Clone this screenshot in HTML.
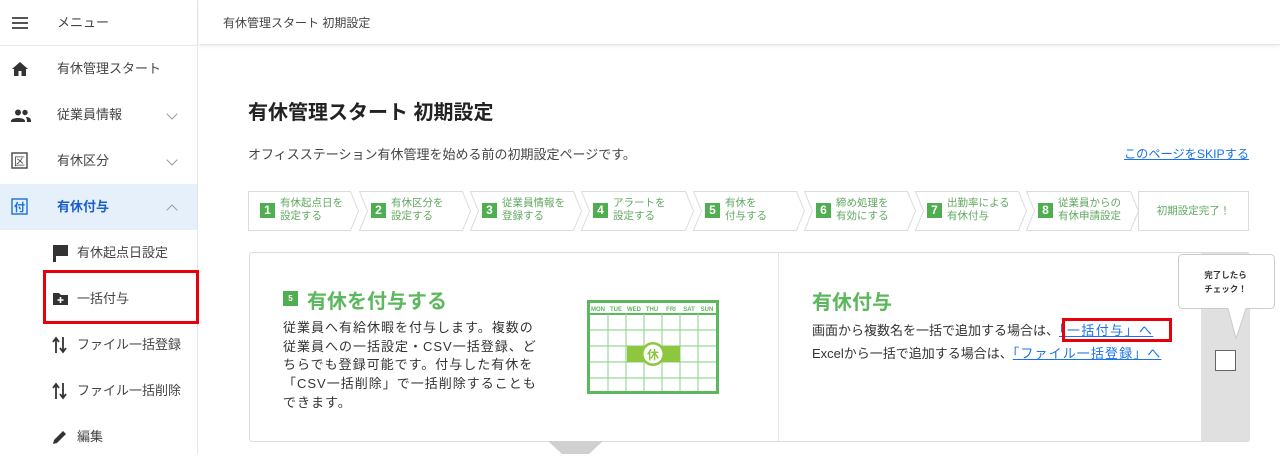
<!DOCTYPE html>
<html lang="ja"><head><meta charset="utf-8">
<style>
*{margin:0;padding:0;box-sizing:border-box}
body{width:1280px;height:454px;overflow:hidden;background:#fff;font-family:"Liberation Sans","Noto Sans CJK JP",sans-serif;color:#333;position:relative}
.a{position:absolute}
.side{left:0;top:0;width:198px;height:454px;border-right:1px solid #e4e4e4}
.mi{position:absolute;left:0;width:197px;height:46px;font-size:13px;color:#444;line-height:46px}
.mi .t{position:absolute;left:57px}
.mi .ic{position:absolute;left:11px;top:15px}
.chev{position:absolute;left:168px;top:18px;width:8px;height:8px;border-right:1.5px solid #999;border-bottom:1.5px solid #999;transform:rotate(45deg)}
.sub .t{left:77px}
.sub .ic{left:52px}
.step{position:absolute;top:191px;height:40px;font-size:10.5px;color:#62a862;line-height:13px}
.num{position:absolute;left:12px;top:12px;width:15px;height:15px;background:#4fae4f;color:#fff;font-size:12px;font-weight:bold;text-align:center;line-height:15px}
.st{position:absolute;left:32px;top:6px;white-space:nowrap}
</style></head><body>
<div class="a side">
  <div class="mi" style="top:0;border-bottom:1px solid #e8e8e8;height:46px">
    <svg class="ic" width="18" height="16" viewBox="0 0 18 16" style="top:16px"><path d="M1 2h16M1 7h16M1 12h16" stroke="#555" stroke-width="2"/></svg>
    <span class="t">メニュー</span></div>
  <div class="mi" style="top:46px">
    <svg class="ic" width="18" height="16" viewBox="0 0 18 16"><path d="M9 1L1 8h2v7h4.5v-5h3v5H15V8h2z" fill="#333"/></svg>
    <span class="t">有休管理スタート</span></div>
  <div class="mi" style="top:92px">
    <svg class="ic" width="20" height="14" viewBox="0 0 20 14" style="top:17px"><circle cx="7" cy="3.5" r="3" fill="#333"/><circle cx="14" cy="3.5" r="2.7" fill="#333"/><path d="M0 12c0-4 14-4 14 0v1H0zM15 8c3 0 5 1 5 4v1h-4c0-2-0.5-4-1-5z" fill="#333"/></svg>
    <span class="t">従業員情報</span><div class="chev"></div></div>
  <div class="mi" style="top:138px">
    <svg class="ic" width="17" height="17" viewBox="0 0 17 17" style="top:14px"><rect x="1" y="1" width="15" height="15" fill="none" stroke="#444" stroke-width="1.4"/><text x="8.5" y="13" font-size="11" text-anchor="middle" fill="#444">区</text></svg>
    <span class="t">有休区分</span><div class="chev"></div></div>
  <div class="mi" style="top:184px;background:#e6f0fb;color:#1a5fcc;font-weight:bold">
    <svg class="ic" width="17" height="17" viewBox="0 0 17 17" style="top:14px"><rect x="1" y="1" width="15" height="15" fill="none" stroke="#1a6fd6" stroke-width="1.4"/><text x="8.5" y="13" font-size="11" text-anchor="middle" fill="#1a6fd6" font-weight="bold">付</text></svg>
    <span class="t">有休付与</span><div class="chev" style="top:22px;transform:rotate(225deg)"></div></div>
  <div class="mi sub" style="top:230px">
    <svg class="ic" width="17" height="18" viewBox="0 0 17 18" style="top:14px"><path d="M1 1h15v11H4v6H1z" fill="#333"/></svg>
    <span class="t">有休起点日設定</span></div>
  <div class="mi sub" style="top:276px">
    <svg class="ic" width="17" height="14" viewBox="0 0 17 14" style="top:16px"><path d="M1 1h6l2 2h7v10H1z" fill="#333"/><path d="M8.5 5v6M5.5 8h6" stroke="#fff" stroke-width="1.6"/></svg>
    <span class="t">一括付与</span></div>
  <div class="mi sub" style="top:322px">
    <svg class="ic" width="16" height="18" viewBox="0 0 16 18" style="top:14px"><path d="M4 17V3M1 6l3-4 3 4M11 1v14M8 12l3 4 3-4" stroke="#333" stroke-width="1.8" fill="none"/></svg>
    <span class="t">ファイル一括登録</span></div>
  <div class="mi sub" style="top:368px">
    <svg class="ic" width="16" height="18" viewBox="0 0 16 18" style="top:14px"><path d="M4 17V3M1 6l3-4 3 4M11 1v14M8 12l3 4 3-4" stroke="#333" stroke-width="1.8" fill="none"/></svg>
    <span class="t">ファイル一括削除</span></div>
  <div class="mi sub" style="top:414px">
    <svg class="ic" width="16" height="16" viewBox="0 0 16 16"><path d="M1 15l1-4 9-9 3 3-9 9z" fill="#333"/></svg>
    <span class="t">編集</span></div>
</div>
<div class="a" style="left:43px;top:270px;width:156px;height:54px;border:3px solid #e8000b"></div>

<div class="a" style="left:199px;top:0;width:1081px;height:45px;border-bottom:1px solid #e4e4e4;box-shadow:0 2px 3px rgba(0,0,0,.06)"></div>
<div class="a" style="left:223px;top:14px;font-size:12px;color:#444">有休管理スタート 初期設定</div>
<div class="a" style="left:248px;top:96px;font-size:20px;font-weight:bold;color:#222">有休管理スタート 初期設定</div>
<div class="a" style="left:248px;top:144px;font-size:13px;color:#444">オフィスステーション有休管理を始める前の初期設定ページです。</div>
<div class="a" style="left:1124px;top:144px;font-size:12.2px;color:#1a73e8;text-decoration:underline">このページをSKIPする</div>

<svg class="a" style="left:247px;top:190px" width="1003" height="42">
<g fill="#fff" stroke="#dcdcdc" stroke-width="1">
<path d="M1.5 1.5h102l8 19.5-8 19.5h-102z"/>
<path d="M112.5 1.5h103l8 19.5-8 19.5h-103l8-19.5z"/>
<path d="M223.5 1.5h103l8 19.5-8 19.5h-103l8-19.5z"/>
<path d="M334.5 1.5h104l8 19.5-8 19.5h-104l8-19.5z"/>
<path d="M446.5 1.5h103l8 19.5-8 19.5h-103l8-19.5z"/>
<path d="M557.5 1.5h103l8 19.5-8 19.5h-103l8-19.5z"/>
<path d="M668.5 1.5h103l8 19.5-8 19.5h-103l8-19.5z"/>
<path d="M779.5 1.5h104l8 19.5-8 19.5h-104l8-19.5z"/>
<path d="M891.5 1.5h110v39h-110z"/>
</g></svg>
<div class="step" style="left:248px"><div class="num">1</div><div class="st">有休起点日を<br>設定する</div></div>
<div class="step" style="left:359px"><div class="num">2</div><div class="st">有休区分を<br>設定する</div></div>
<div class="step" style="left:470px"><div class="num">3</div><div class="st">従業員情報を<br>登録する</div></div>
<div class="step" style="left:581px"><div class="num">4</div><div class="st">アラートを<br>設定する</div></div>
<div class="step" style="left:693px"><div class="num">5</div><div class="st">有休を<br>付与する</div></div>
<div class="step" style="left:804px"><div class="num">6</div><div class="st">締め処理を<br>有効にする</div></div>
<div class="step" style="left:915px"><div class="num">7</div><div class="st">出勤率による<br>有休付与</div></div>
<div class="step" style="left:1026px"><div class="num">8</div><div class="st">従業員からの<br>有休申請設定</div></div>
<div class="step" style="left:1138px;width:111px;text-align:center;line-height:40px">初期設定完了！</div>

<div class="a" style="left:249px;top:252px;width:1001px;height:190px;border:1px solid #dcdcdc;border-radius:3px"></div>
<div class="a" style="left:778px;top:253px;width:1px;height:188px;background:#e4e4e4"></div>
<div class="a" style="left:1201px;top:253px;width:48px;height:188px;background:#e0e0e0"></div>
<div class="a" style="left:1215px;top:350px;width:21px;height:21px;border:1px solid #666;background:#fff"></div>
<svg class="a" style="left:1177px;top:253px" width="98" height="90"><path d="M5.5 1.5h88a4 4 0 0 1 4 4v46a4 4 0 0 1-4 4H69l-10 30-8-30H5.5a4 4 0 0 1-4-4v-46a4 4 0 0 1 4-4z" fill="#fff" stroke="#ccc"/></svg>
<div class="a" style="left:1178px;top:268px;width:95px;text-align:center;font-size:8.5px;font-weight:bold;line-height:14px;color:#333">完了したら<br>チェック！</div>
<svg class="a" style="left:548px;top:441px" width="55" height="13"><path d="M0 0h55l-14 13H14z" fill="#d0d0d0"/></svg>

<div class="a" style="left:283px;top:291px;width:15px;height:15px;background:#4fae4f;color:#fff;font-size:8px;font-weight:bold;text-align:center;line-height:15px">5</div>
<div class="a" style="left:307px;top:285px;font-size:20px;font-weight:bold;color:#5cb85c">有休を付与する</div>
<div class="a" style="left:283px;top:319px;font-size:13px;letter-spacing:1px;line-height:18.7px;color:#333;white-space:nowrap">従業員へ有給休暇を付与します。複数の<br>従業員への一括設定・CSV一括登録、ど<br>ちらでも登録可能です。付与した有休を<br>「CSV一括削除」で一括削除することも<br>できます。</div>

<svg class="a" style="left:587px;top:300px" width="132" height="94">
<rect x="1.5" y="1.5" width="129" height="91" fill="#fff" stroke="#5cb85c" stroke-width="3"/>
<line x1="3" y1="14" x2="129" y2="14" stroke="#5cb85c" stroke-width="2"/>
<g font-size="6" font-weight="bold" fill="#5cb85c" text-anchor="middle"><text x="11" y="11">MON</text><text x="29" y="11">TUE</text><text x="47" y="11">WED</text><text x="65" y="11">THU</text><text x="84" y="11">FRI</text><text x="102" y="11">SAT</text><text x="120" y="11">SUN</text></g>
<g stroke="#9bd69b" stroke-width="1.2"><path d="M3 30h126M3 46h126M3 62h126M3 78h126M21 14v77M39 14v77M57 14v77M75 14v77M93 14v77M111 14v77"/></g>
<rect x="40" y="46" width="53" height="16" fill="#8dc63f"/>
<circle cx="66" cy="54" r="12" fill="#8dc63f"/><circle cx="66" cy="54" r="9.5" fill="#fff"/>
<text x="66" y="59" font-size="12" font-weight="bold" fill="#8dc63f" text-anchor="middle">休</text>
</svg>

<div class="a" style="left:812px;top:286px;font-size:20px;font-weight:bold;color:#5cb85c">有休付与</div>
<div class="a" style="left:812px;top:319px;font-size:13px;line-height:23px;color:#333;white-space:nowrap">画面から複数名を一括で追加する場合は、<span style="color:#1a73e8;text-decoration:underline;letter-spacing:1.4px">「一括付与」へ</span><br>Excelから一括で追加する場合は、<span style="color:#1a73e8;text-decoration:underline;letter-spacing:1.1px">「ファイル一括登録」へ</span></div>
<div class="a" style="left:1062px;top:318px;width:110px;height:24px;border:3px solid #e8000b"></div>
</body></html>
